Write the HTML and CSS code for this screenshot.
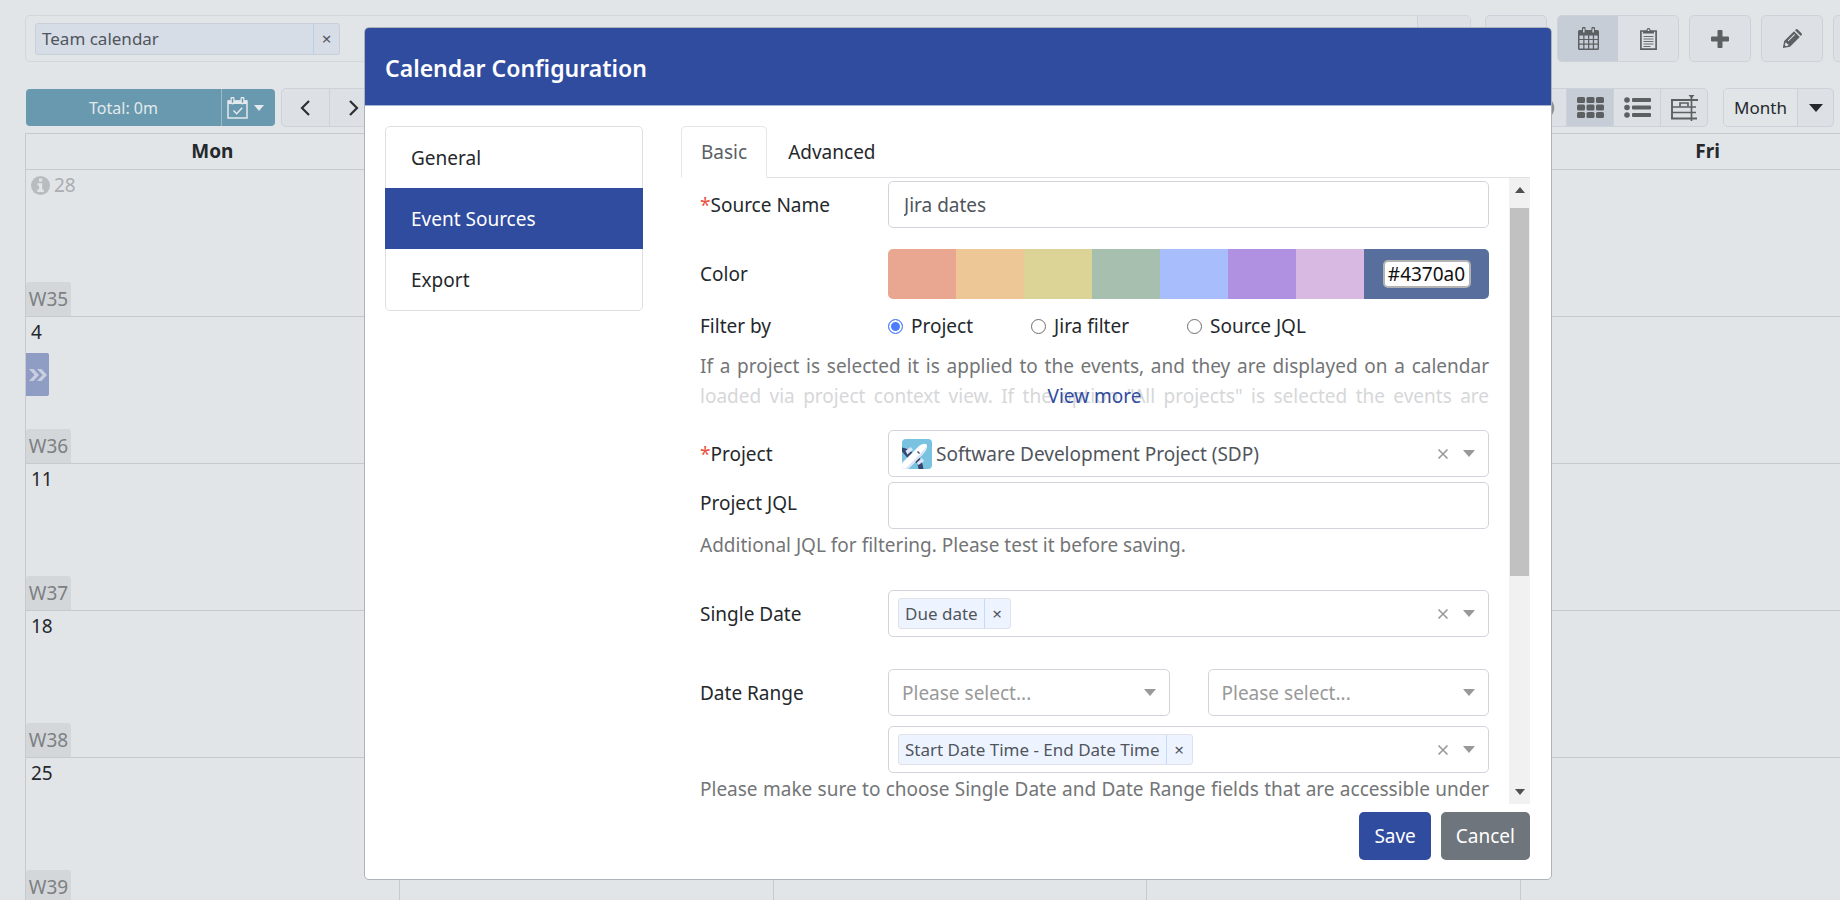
FILE: index.html
```html
<!DOCTYPE html>
<html lang="en">
<head>
<meta charset="utf-8">
<title>Calendar Configuration</title>
<link rel="stylesheet" href="styles.css">
</head>
<body>
<svg class="defs" aria-hidden="true">
  <symbol id="caret" viewBox="0 0 12 7"><path d="M0 0h12L6 7z" fill="currentColor"/></symbol>
  <symbol id="clear" viewBox="0 0 12 12"><path d="M1.500 1.500l9 9m0-9l-9 9" stroke="currentColor" stroke-width="1.600" fill="none"/></symbol>
</svg>
<div class="app">
  <header class="topbar">
    <div class="picker">
      <div class="picker-values">
        <span class="tag tag-wide"><span class="tag-label">Team calendar</span><button class="tag-remove" aria-label="Remove Team calendar">×</button></span>
      </div>
      <button class="picker-toggle" aria-label="Open calendars"></button>
    </div>
    <button class="tool" aria-label="Refresh"></button>
    <div class="group">
      <button class="tool is-on" aria-label="Calendar view">
        <svg width="21" height="23" viewBox="0 0 21 23"><path fill="currentColor" fill-rule="evenodd" d="M1.500 3H4V1.500a1.800 1.800 0 0 1 3.600 0V3h5.800V1.500a1.800 1.800 0 0 1 3.600 0V3h2.500Q21 3 21 4.500v17q0 1.500-1.500 1.500h-18Q0 23 0 21.500v-17Q0 3 1.500 3zM5 1.600v3.800h1.600V1.600zm9.400 0v3.800H16V1.600zM1.500 8.500V12h3.700V8.500zm5 0V12H10V8.500zm4.800 0V12h3.500V8.500zm4.800 0V12h3.500V8.500zM1.500 13v3.600h3.700V13zm5 0v3.600H10V13zm4.800 0v3.600h3.500V13zm4.800 0v3.600h3.500V13zM1.500 17.700v3.800h3.700v-3.800zm5 0v3.800H10v-3.800zm4.800 0v3.800h3.500v-3.800zm4.800 0v3.800h3.500v-3.800z"/></svg>
      </button>
      <button class="tool" aria-label="Tasks view">
        <svg width="17" height="22" viewBox="0 0 17 22"><path d="M.9 3h15.200v18.100H.9z" fill="none" stroke="currentColor" stroke-width="1.700"/><path d="M3 5.500V3h3.500V2a2 2 0 0 1 4 0v1H14v2.500z" fill="currentColor"/><circle cx="8.500" cy="2.200" r=".9" fill="#dde0e5"/><path d="M3.500 8.500h10m-10 2.500h10m-10 2.500h10m-10 2.500h10m-10 2.500h7" stroke="currentColor" stroke-width=".9"/></svg>
      </button>
    </div>
    <button class="tool" aria-label="Add">
      <svg width="18" height="18" viewBox="0 0 18 18"><path d="M6.500 1q0-1 1-1h3q1 0 1 1v5.500H17q1 0 1 1v3q0 1-1 1h-5.500V17q0 1-1 1h-3q-1 0-1-1v-5.500H1q-1 0-1-1v-3q0-1 1-1h5.500z" fill="currentColor"/></svg>
    </button>
    <button class="tool" aria-label="Edit">
      <svg width="19" height="19" viewBox="0 0 19 19"><path fill="currentColor" fill-rule="evenodd" d="M1.200 12L11 2.200 16.800 8 7 17.800 0 19v-1zM2.400 13.700l-.7 2.300 1.300 1.300 2.300-.7v-1.500H3.900v-1.400zM4.800 11.600l.7.700L12 5.800l-.7-.7zM12 1.200L12.700.5q1-1 2 0l3.800 3.800q1 1 0 2l-.7.7z"/></svg>
    </button>
    <button class="tool" aria-label="More"></button>
  </header>

  <div class="subbar">
    <div class="total">
      <button class="total-label">Total: 0m</button>
      <button class="total-menu" aria-label="Total options">
        <svg width="21" height="22" viewBox="0 0 21 22"><path d="M1 4h19v17H1z" fill="none" stroke="currentColor" stroke-width="1.500"/><path d="M1 3.500h19V7H1z" fill="currentColor"/><path d="M5.500 1.500v4M15.500 1.500v4" stroke="currentColor" stroke-width="4" stroke-linecap="round"/><path d="M5.500 2v3M15.500 2v3" stroke="#6899ae" stroke-width="1.500" stroke-linecap="round"/><path d="M6.500 13.500l3.200 3.200 5.500-6" fill="none" stroke="currentColor" stroke-width="1.500"/></svg>
        <svg class="caret-small" viewBox="0 0 12 7"><use href="#caret"/></svg>
      </button>
    </div>
    <div class="group nav">
      <button class="step" aria-label="Previous"><svg width="11" height="16" viewBox="0 0 11 16"><path d="M9 1L2 8l7 7" fill="none" stroke="currentColor" stroke-width="2.200"/></svg></button>
      <button class="step" aria-label="Next"><svg width="11" height="16" viewBox="0 0 11 16"><path d="M2 1l7 7-7 7" fill="none" stroke="currentColor" stroke-width="2.200"/></svg></button>
    </div>
    <div class="group views">
      <button class="step" aria-label="Time"><svg width="24" height="24" viewBox="0 0 24 24"><circle cx="12" cy="12" r="10" fill="none" stroke="#8c8f93" stroke-width="2.500"/></svg></button>
      <button class="step is-on" aria-label="Grid"><svg width="27" height="21" viewBox="0 0 27 21" fill="currentColor"><rect width="8" height="6" rx="1.500"/><rect x="9.500" width="8" height="6" rx="1.500"/><rect x="19" width="8" height="6" rx="1.500"/><rect y="7.500" width="8" height="6" rx="1.500"/><rect x="9.500" y="7.500" width="8" height="6" rx="1.500"/><rect x="19" y="7.500" width="8" height="6" rx="1.500"/><rect y="15" width="8" height="6" rx="1.500"/><rect x="9.500" y="15" width="8" height="6" rx="1.500"/><rect x="19" y="15" width="8" height="6" rx="1.500"/></svg></button>
      <button class="step" aria-label="List"><svg width="27" height="21" viewBox="0 0 27 21" fill="currentColor"><circle cx="3" cy="3" r="2.800"/><circle cx="3" cy="10.500" r="2.800"/><circle cx="3" cy="18" r="2.800"/><rect x="8" y="1" width="19" height="4" rx="1"/><rect x="8" y="8.500" width="19" height="4" rx="1"/><rect x="8" y="16" width="19" height="4" rx="1"/></svg></button>
      <button class="step" aria-label="Timeline"><svg width="27" height="26" viewBox="0 0 27 26" fill="none" stroke="currentColor"><path d="M0 5h27M1 5v19M0 23.500h26" stroke-width="1.900"/><path d="M1 12h24M1 17.500h24" stroke-width="1.400"/><path d="M9 11.500V8h8v3.500M20.500 1v25" stroke-width="1.700"/><path d="M17.500 0h6l-3 3.500z" fill="currentColor" stroke="none"/></svg></button>
    </div>
    <div class="group">
      <button class="range">Month</button>
      <button class="range-menu" aria-label="Choose range"><svg width="14" height="8" viewBox="0 0 12 7" preserveAspectRatio="none"><use href="#caret"/></svg></button>
    </div>
  </div>

  <table class="calendar">
    <thead><tr><th>Mon</th><th>Tue</th><th>Wed</th><th>Thu</th><th>Fri</th></tr></thead>
    <tbody>
      <tr><td><div class="day"><span class="date muted"><svg width="19" height="19" viewBox="0 0 19 19"><circle cx="9.500" cy="9.500" r="9.500" fill="#b9bcbf"/><path d="M8 2.500h3.200v3H8zM6.500 7.200h4.700v6.300h1.600V16H6.300v-2.500h1.700V9.500H6.500z" fill="#e1e5e8"/></svg>28</span><span class="week">W35</span></div></td><td></td><td></td><td></td><td></td></tr>
      <tr><td><div class="day"><span class="date">4</span><button class="more" aria-label="Show more events"><svg width="18" height="12" viewBox="0 0 18 12"><path d="M0 0h4.500L10 6l-5.500 6H0l5.500-6zM8 0h4.500L18 6l-5.500 6H8l5.500-6z" fill="#c9cfe0"/></svg></button><span class="week">W36</span></div></td><td></td><td></td><td></td><td></td></tr>
      <tr><td><div class="day"><span class="date">11</span><span class="week">W37</span></div></td><td></td><td></td><td></td><td></td></tr>
      <tr><td><div class="day"><span class="date">18</span><span class="week">W38</span></div></td><td></td><td></td><td></td><td></td></tr>
      <tr><td><div class="day"><span class="date">25</span><span class="week">W39</span></div></td><td></td><td></td><td></td><td></td></tr>
    </tbody>
  </table>

  <div class="overlay">
    <section class="modal" role="dialog" aria-labelledby="modal-title">
      <h1 class="modal-title" id="modal-title">Calendar Configuration</h1>
      <div class="modal-body">
        <nav class="side">
          <a class="side-item" href="#general">General</a>
          <a class="side-item is-active" href="#sources">Event Sources</a>
          <a class="side-item" href="#export">Export</a>
        </nav>
        <div class="main">
          <div class="tabs" role="tablist">
            <button class="tab is-active" role="tab" aria-selected="true">Basic</button>
            <button class="tab" role="tab" aria-selected="false">Advanced</button>
          </div>
          <div class="pane">
            <form class="form" id="source-form">
              <div class="row">
                <label class="label" for="name"><span class="req">*</span>Source Name</label>
                <input class="field text-field" id="name" type="text" value="Jira dates">
              </div>
              <div class="row row-color">
                <label class="label" for="hex">Color</label>
                <div class="swatches">
                  <button type="button" class="swatch c1" aria-label="Red"></button>
                  <button type="button" class="swatch c2" aria-label="Orange"></button>
                  <button type="button" class="swatch c3" aria-label="Yellow"></button>
                  <button type="button" class="swatch c4" aria-label="Green"></button>
                  <button type="button" class="swatch c5" aria-label="Blue"></button>
                  <button type="button" class="swatch c6" aria-label="Purple"></button>
                  <button type="button" class="swatch c7" aria-label="Pink"></button>
                  <div class="custom"><input class="hex" id="hex" type="text" value="#4370a0"></div>
                </div>
              </div>
              <div class="row row-filter" role="radiogroup" aria-labelledby="filter-label">
                <span class="label" id="filter-label">Filter by</span>
                <div class="radios">
                  <label class="radio"><input type="radio" name="filter" checked>Project</label>
                  <label class="radio"><input type="radio" name="filter">Jira filter</label>
                  <label class="radio"><input type="radio" name="filter">Source JQL</label>
                </div>
              </div>
              <div class="hint hint-clipped">
                <span class="line">If a project is selected it is applied to the events, and they are displayed on a calendar</span>
                <span class="line faded">loaded via project context view. If the option "All projects" is selected the events are</span>
                <a class="view-more" href="#more">View more</a>
              </div>
              <div class="row row-project">
                <label class="label" for="project"><span class="req">*</span>Project</label>
                <div class="field combo">
                  <svg class="avatar" width="30" height="30" viewBox="0 0 30 30"><defs><clipPath id="av"><rect width="30" height="30" rx="4"/></clipPath></defs><g clip-path="url(#av)"><path fill="#79c3e0" d="M0 0h30v30H0z"/><path fill="#344770" d="M0 8.500l4 1 8 5-6 5-6-7zM12 22l5-4 3.500 7 1 5h-5l-1-5z"/><path fill="#dfe5f5" d="M3.500 12l5-4 2.500 2.500-5.500 5zM14.500 24l5.500-5 2 3-5.500 4z"/><path fill="#fff" d="M0 24L15 9q5-5 9-4 2 1 0 6-1 2-4 5L6 30H0z"/><path fill="#dde3f4" d="M24.500 7q0 4-4.500 9L6 30H3L18 15q5-5 6.500-8z"/><path stroke="#344770" stroke-width="1.300" d="M15.500 12.500l2 2"/></g></svg>
                  <select class="native" id="project"><option>Software Development Project (SDP)</option></select>
                  <button type="button" class="clear" aria-label="Clear project"><svg width="12" height="12"><use href="#clear"/></svg></button>
                  <svg class="caret" viewBox="0 0 12 7"><use href="#caret"/></svg>
                </div>
              </div>
              <div class="row row-jql">
                <label class="label" for="jql">Project JQL</label>
                <input class="field text-field" id="jql" type="text">
              </div>
              <p class="hint">Additional JQL for filtering. Please test it before saving.</p>
              <div class="row row-single">
                <label class="label" for="single">Single Date</label>
                <div class="field combo combo-multi">
                  <span class="tag"><span class="tag-label">Due date</span><button type="button" class="tag-remove" aria-label="Remove Due date">×</button></span>
                  <input class="native" id="single" type="text">
                  <button type="button" class="clear" aria-label="Clear single dates"><svg width="12" height="12"><use href="#clear"/></svg></button>
                  <svg class="caret" viewBox="0 0 12 7"><use href="#caret"/></svg>
                </div>
              </div>
              <div class="row row-range">
                <label class="label" for="range-start">Date Range</label>
                <div class="pair">
                  <div class="field combo">
                    <select class="native placeholder" id="range-start"><option>Please select...</option></select>
                    <svg class="caret" viewBox="0 0 12 7"><use href="#caret"/></svg>
                  </div>
                  <div class="field combo">
                    <select class="native placeholder" aria-label="Range end"><option>Please select...</option></select>
                    <svg class="caret" viewBox="0 0 12 7"><use href="#caret"/></svg>
                  </div>
                </div>
              </div>
              <div class="row row-ranges">
                <span class="label"></span>
                <div class="field combo combo-multi">
                  <span class="tag"><span class="tag-label">Start Date Time - End Date Time</span><button type="button" class="tag-remove" aria-label="Remove range">×</button></span>
                  <input class="native" type="text" aria-label="Date ranges">
                  <button type="button" class="clear" aria-label="Clear ranges"><svg width="12" height="12"><use href="#clear"/></svg></button>
                  <svg class="caret" viewBox="0 0 12 7"><use href="#caret"/></svg>
                </div>
              </div>
              <p class="hint"><span class="line">Please make sure to choose Single Date and Date Range fields that are accessible under</span></p>
            </form>
            <div class="scrollbar" aria-hidden="true">
              <svg class="arrow" viewBox="0 0 10 6"><path d="M0 6h10L5 0z" fill="#505050"/></svg>
              <div class="track"><div class="thumb"></div></div>
              <svg class="arrow" viewBox="0 0 10 6"><path d="M0 0h10L5 6z" fill="#505050"/></svg>
            </div>
          </div>
        </div>
      </div>
      <footer class="actions">
        <button class="btn btn-primary" form="source-form">Save</button>
        <button class="btn btn-secondary">Cancel</button>
      </footer>
    </section>
  </div>
</div>
</body>
</html>
```
FILE: styles.css
```css
* { box-sizing: border-box; }

:root {
  --page: #e1e5e8;
  --line: #c6cacd;
  --ctl: #dde0e5;
  --ctl-line: #cdd1d9;
  --ctl-on: #c7cdd7;
  --primary: #304c9f;
  --field-line: #d3d3dc;
  --text: #25282c;
}

html { overflow: hidden; }
body {
  margin: 0;
  height: 100vh;
  overflow: hidden;
  background: var(--page);
  color: var(--text);
  font-family: "Noto Sans", "Open Sans", sans-serif;
  font-size: 19px;
  line-height: 30px;
}
button, input, select { font: inherit; color: inherit; margin: 0; }
button { cursor: pointer; border: 0; padding: 0; background: none; }
a { text-decoration: none; }
.defs { display: none; }

/* The board is wider than the window and runs off its right edge. */
.app { position: relative; width: calc(100% + 76px); padding: 15px 21px 0 25px; }

.topbar { display: flex; gap: 10px; height: 47px; }
.picker { flex: 1; display: flex; margin-right: 4px; border: 1px solid #d3d6da; border-radius: 5px; }
.picker-values { flex: 1; display: flex; align-items: center; padding-left: 9px; }
.picker-toggle { width: 53px; background: var(--ctl); border-left: 1px solid var(--ctl-line); border-radius: 0 4px 4px 0; }
.group { display: flex; border: 1px solid var(--ctl-line); border-radius: 5px; background: var(--ctl); overflow: hidden; }
.tool { width: 62px; display: flex; align-items: center; justify-content: center; color: #5d6063; background: var(--ctl); border: 1px solid var(--ctl-line); border-radius: 5px; }
.group .tool { width: 60px; border: 0; border-radius: 0; }
.group .is-on { background: var(--ctl-on); }

.tag { display: flex; height: 31px; background: #edf4ff; border: 1px solid #dfe2e8; border-radius: 3px; font-size: 17px; line-height: 30px; color: #50555c; white-space: nowrap; }
.tag-label { padding: 0 6px; }
.tag-remove { width: 26px; border-left: 1px solid #c2dbfa; line-height: 29px; }
.tag-wide { width: 305px; height: 32px; background: #d6dde6; border-color: #c9cfd8; }
.tag-wide .tag-label { flex: 1; }
.tag-wide .tag-remove { border-color: #b8cfe8; }

.subbar { display: flex; align-items: center; height: 39px; margin: 26px 61px 6px 1px; }
.total { display: flex; height: 37px; width: 249px; border-radius: 4px; background: #6899ae; color: #e3e9ec; font-size: 16px; }
.total-label { flex: 1; }
.total-menu { width: 54px; display: flex; align-items: center; gap: 6px; padding-left: 5px; border-left: 1px solid #9fb9c5; }
.caret-small { width: 10px; height: 6px; }
.nav { margin-left: 6px; }
.subbar .group { height: 39px; }
.step { width: 47px; display: flex; align-items: center; justify-content: center; color: #2c2f33; border-left: 1px solid var(--ctl-line); }
.step:first-child { border-left: 0; }
.views { margin-left: auto; margin-right: 15px; }
.views .step { color: #5d6063; }
.range { width: 73px; background: var(--page); font-size: 17px; }
.range-menu { width: 36px; border-left: 1px solid var(--ctl-line); }
.range-menu svg { display: block; margin: auto; }

.calendar { width: 100%; border-collapse: collapse; table-layout: fixed; }
.calendar th, .calendar td { border: 1px solid var(--line); padding: 0; }
.calendar th { height: 36px; line-height: 35px; font-weight: 700; }
.calendar td { height: 147px; vertical-align: top; }
.day { height: 146px; display: flex; flex-direction: column; align-items: flex-start; }
.date { display: flex; align-items: center; gap: 4px; padding-left: 5px; }
.muted { color: #abadb0; }
.week { margin-top: auto; width: 45px; height: 34px; text-align: center; line-height: 34px; background: #d3d7da; border-radius: 3px 3px 0 0; color: #7d8082; }
.more { width: 23px; height: 43px; margin-top: 6px; background: #8f9cc3; border-radius: 0 2px 2px 0; display: flex; align-items: center; justify-content: center; }

.overlay { position: absolute; top: 27px; left: 0; right: 0; display: flex; justify-content: center; }
.modal { width: 100%; max-width: 1188px; background: #fff; border: 1px solid #aeb3ba; border-radius: 5px; overflow: hidden; }
.modal-title { margin: 0; height: 78px; padding: 0 20px; background: var(--primary); border-bottom: 1px solid #a9b3d4; color: #fff; font-size: 23px; line-height: 80px; font-weight: 600; }
.modal-body { display: flex; gap: 38px; padding: 20px 21px 0 20px; }

.side { width: 258px; align-self: flex-start; border: 1px solid #dfdfe1; border-radius: 5px; }
.side-item { display: block; height: 61px; padding: 0 25px; line-height: 62px; color: var(--text); }
.side-item.is-active { margin: 0 -1px; padding: 0 26px; background: var(--primary); color: #fff; }

.main { flex: 1; min-width: 0; }
.tabs { display: flex; height: 52px; border-bottom: 1px solid #dee0e4; }
.tab { height: 52px; padding: 0 20px; border: 1px solid transparent; }
.tab.is-active { padding: 0 19px; background: #fff; color: #5a5f66; border-color: #e6e6e8; border-bottom-color: #fff; border-radius: 5px 5px 0 0; }
.pane { display: flex; justify-content: space-between; padding-left: 19px; }
.form { flex: 1; max-width: 789px; padding-top: 3px; }

.row { display: flex; align-items: center; }
.label { width: 188px; flex: none; white-space: nowrap; }
.req { color: #e8513c; }
.field { flex: 1; min-width: 0; height: 47px; background: #fff; border: 1px solid var(--field-line); border-radius: 5px; }
.text-field { padding: 0 15px; color: #50555c; }
.row-color { margin-top: 21px; }
.swatches { flex: 1; display: flex; height: 50px; border-radius: 5px; overflow: hidden; }
.swatch { flex: 68; }
.custom { flex: 125; display: flex; align-items: center; justify-content: center; background: #586f9e; }
.c1 { background: #e9a791; }
.c2 { background: #edc796; }
.c3 { background: #dcd397; }
.c4 { background: #a7bfae; }
.c5 { background: #a8bdfc; }
.c6 { background: #b090e0; }
.c7 { background: #d8b9e2; }
.hex { width: 88px; height: 28px; padding: 0; text-align: center; color: #111; background: #fff; border: 2px solid #b3b3b3; border-radius: 5px; }

.row-filter { margin-top: 12px; }
.radios { display: flex; gap: 58px; }
.radio { display: flex; align-items: center; gap: 8px; }
.radio input { appearance: none; width: 15px; height: 15px; border: 1px solid #6e6e6e; border-radius: 50%; background: #fff; }
.radio input:checked { border: 1px solid #4c7dff; background: #4c7dff; box-shadow: inset 0 0 0 2px #fff; }

.hint { margin: 0; color: #737577; }
.hint-clipped { position: relative; margin-top: 10px; }
.line { display: block; text-align-last: justify; white-space: nowrap; }
.faded { color: #d6d7d9; }
.view-more { position: absolute; left: 0; right: 0; bottom: 0; text-align: center; color: var(--primary); }

.row-project { margin-top: 19px; }
.combo { display: flex; align-items: center; padding: 0 13px; }
.combo-multi { padding-left: 9px; }
.avatar { margin-right: 4px; flex: none; }
.native { appearance: none; flex: 1; min-width: 0; height: 43px; padding: 0; border: 0; background: transparent; color: #50555c; outline: 0; }
.placeholder { color: #999; }
.clear { width: 12px; height: 12px; margin-right: 14px; color: #999; line-height: 0; }
.caret { width: 12px; height: 7px; color: #999; flex: none; }
.row-jql { margin-top: 5px; }
.row-jql .label { padding-bottom: 5px; }
.row-jql + .hint { margin-top: 1px; }
.row-single { margin-top: 30px; }
.row-range { margin-top: 32px; }
.pair { flex: 1; display: grid; grid-template-columns: 1fr 1fr; gap: 38px; }
.row-ranges { margin-top: 10px; }
.row-ranges + .hint { margin-top: 1px; }

.scrollbar { width: 21px; display: flex; flex-direction: column; align-items: center; background: #f1f1f1; height: 626px; padding: 9px 0; }
.arrow { width: 10px; height: 6px; flex: none; }
.track { flex: 1; width: 19px; margin: 15px 0; }
.thumb { height: 65%; background: #c1c1c1; }

.actions { display: flex; justify-content: flex-end; gap: 10px; padding: 8px 21px 19px; }
.btn { height: 48px; padding: 0 15px; border-radius: 5px; color: #fff; }
.btn-primary { background: var(--primary); }
.btn-secondary { background: #6e757c; }
```
